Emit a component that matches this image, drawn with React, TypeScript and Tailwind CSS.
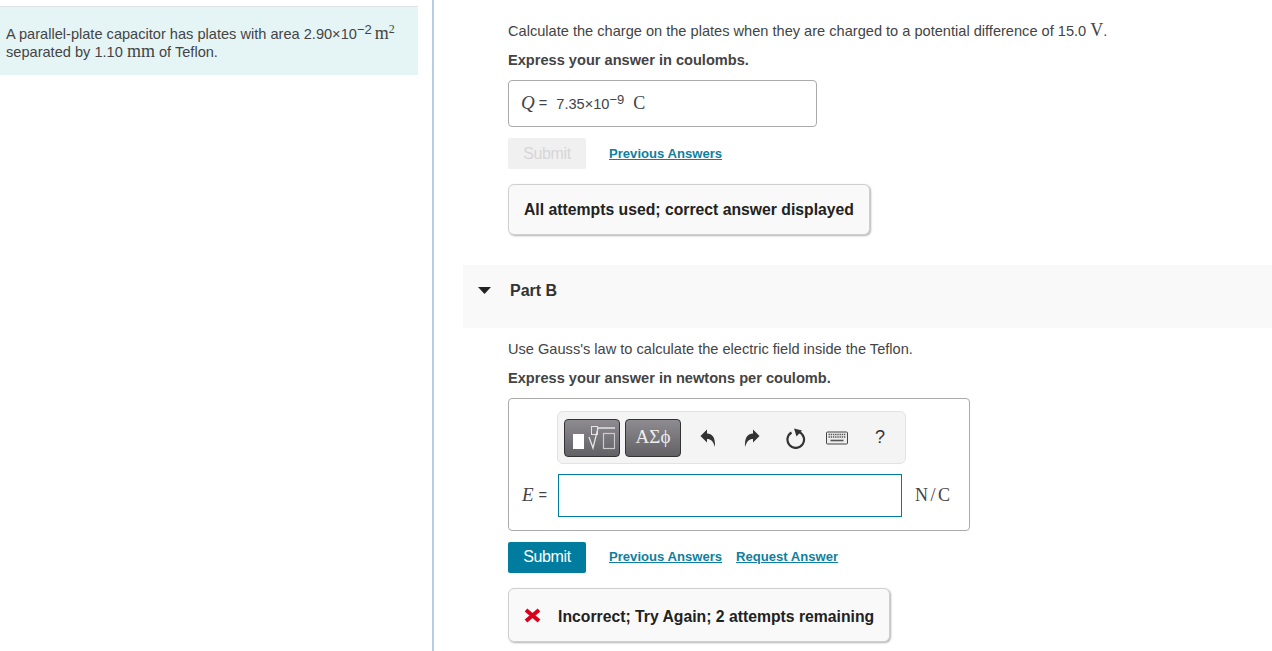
import React from "react";

const serif = "font-['Liberation_Serif',serif]";

function Actions({ disabled, request }: { disabled?: boolean; request?: boolean }) {
  return (
    <div className="flex items-center h-[31px]">
      <div
        className={`w-[78px] h-[31px] rounded-[2px] flex items-center justify-center text-[16px] tracking-[-0.35px] ${
          disabled ? "bg-[#f0f0f0] text-[#d6d6d6]" : "bg-[#007c9e] text-white pb-[2px]"
        }`}
      >
        Submit
      </div>
      <a className={`ml-[23px] text-[13.1px] font-bold text-[#0f7f9f] underline ${request ? "mb-[2px]" : ""}`}>
        Previous Answers
      </a>
      {request && (
        <a className="ml-[14px] mb-[2px] text-[13.1px] font-bold text-[#0f7f9f] underline">Request Answer</a>
      )}
    </div>
  );
}

function Feedback({ tall, children }: { tall?: boolean; children: React.ReactNode }) {
  return (
    <div
      className={`inline-flex items-center px-[15px] bg-[#f9f9f9] border border-[#cfcfcf] rounded-[6px] shadow-[1px_1px_2px_rgba(0,0,0,0.3)] text-[15.75px] font-bold text-[#222] ${
        tall ? "h-[54px] pt-[3px]" : "h-[51px]"
      }`}
    >
      {children}
    </div>
  );
}

function Toolbar() {
  return (
    <div className="w-[349px] h-[53px] ml-[48px] bg-[#f4f4f4] border border-[#e2e2e2] rounded-[6px] flex items-center pl-[6px]">
      <div className="w-[56px] h-[38px] rounded-[4px] border border-[#333] bg-gradient-to-b from-[#8e8c90] to-[#626165] flex items-center justify-center">
        <svg width="46" height="32" viewBox="0 0 46 32">
          <rect x="4" y="12" width="11" height="15" fill="#fff" />
          <rect x="22.5" y="4.5" width="6" height="8" fill="none" stroke="#e4e4e4" strokeWidth="1" />
          <path d="M20 15l4 11 5-20h17" fill="none" stroke="#e4e4e4" strokeWidth="1.3" />
          <rect x="34.5" y="11.5" width="11" height="15" fill="none" stroke="#ccc" strokeWidth="1.2" />
        </svg>
      </div>
      <div className={`ml-[5px] w-[56px] h-[38px] rounded-[4px] border border-[#333] bg-gradient-to-b from-[#8e8c90] to-[#626165] flex items-center justify-center text-[#eee] text-[19px] ${serif}`}>
        ΑΣϕ
      </div>
      <svg className="ml-[17px]" width="20" height="20" viewBox="0 0 20 20">
        <path d="M2.5 8L9 1.5V5.5C14 5.5 17.5 9 17 19C15 13 13 11 9 11V14.5Z" fill="#333" />
      </svg>
      <svg className="ml-[24px]" width="20" height="20" viewBox="0 0 20 20">
        <path d="M17.5 8L11 1.5V5.5C6 5.5 2.5 9 3 19C5 13 7 11 11 11V14.5Z" fill="#333" />
      </svg>
      <svg className="ml-[22px]" width="22" height="22" viewBox="0 0 22 22">
        <path d="M7.5 5.5A8.3 8.3 0 1 0 15 5" fill="none" stroke="#333" strokeWidth="2.2" />
        <path d="M10 1.5L18 3.5L12.5 9.5Z" fill="#333" />
      </svg>
      <svg className="ml-[20px]" width="24" height="14" viewBox="0 0 24 14">
        <rect x="0.5" y="1" width="21" height="12" rx="1" fill="#eee" stroke="#444" />
        <path d="M2.5 3.5h17M2.5 6h17" stroke="#555" strokeWidth="1.4" strokeDasharray="1.4 0.8" />
        <path d="M4.5 9.5h13" stroke="#555" strokeWidth="1.6" />
      </svg>
      <span className="ml-[25px] text-[18px] text-[#333]">?</span>
    </div>
  );
}

export default function App() {
  return (
    <div className="w-[1272px] h-[651px] overflow-hidden bg-white flex font-['Liberation_Sans',sans-serif] text-[#444]">
      <div className="w-[418px] shrink-0 pt-[6px]">
        <div className="h-[69px] bg-[#e5f5f6] border-t border-[#dfe3e6] pt-[17px] pl-[6px] text-[14.6px] leading-[18px]">
          <div className="h-[18px] whitespace-nowrap">
            A parallel-plate capacitor has plates with area 2.90×10
            <sup className="text-[13px] align-baseline relative top-[-5px]">−2</sup>
            <span className={`${serif} text-[18px] ml-[3px]`}>m</span>
            <sup className={`${serif} text-[12px] align-baseline relative top-[-6px]`}>2</sup>
          </div>
          <div className="whitespace-nowrap">
            separated by 1.10 <span className={`${serif} text-[18px]`}>mm</span> of Teflon.
          </div>
        </div>
      </div>

      <div className="ml-[14px] w-[2px] h-full shrink-0 bg-[#b9cde1]" />

      <div className="flex-1 min-w-0 pl-[29px]">
        <div className="pl-[45px] pt-[20px]">
          <p className="text-[14.6px] leading-[20px] whitespace-nowrap">
            Calculate the charge on the plates when they are charged to a potential difference of 15.0{" "}
            <span className={`${serif} text-[18px]`}>V</span>.
          </p>
          <p className="mt-[9px] text-[14.6px] leading-[20px] font-bold">Express your answer in coulombs.</p>
          <div className="mt-[10px] w-[309px] h-[47px] border border-[#aaa] rounded-[4px] flex items-center pl-[12px]">
            <span className={`${serif} italic text-[19px]`}>Q</span>
            <span className="ml-[4px] text-[14.6px]">=</span>
            <span className="ml-[9px] text-[14.6px] relative top-[1px]">
              7.35×10
              <sup className="text-[13px] align-baseline relative top-[-5px]">−9</sup>
            </span>
            <span className={`${serif} text-[18px] ml-[9px]`}>C</span>
          </div>
          <div className="mt-[11px]">
            <Actions disabled />
          </div>
          <div className="mt-[15px]">
            <Feedback>All attempts used; correct answer displayed</Feedback>
          </div>
        </div>

        <div className="mt-[30px] h-[63px] bg-[#f9f9f9] flex items-start pt-[17px]">
          <svg className="ml-[15px] mt-[5px]" width="13" height="7" viewBox="0 0 13 7">
            <path d="M0 0h13L6.5 7z" fill="#222" />
          </svg>
          <span className="ml-[19px] text-[16px] leading-[18px] font-bold text-[#333]">Part B</span>
        </div>

        <div className="pl-[45px] pt-[11px]">
          <p className="text-[14.6px] leading-[20px]">
            Use Gauss's law to calculate the electric field inside the Teflon.
          </p>
          <p className="mt-[9px] text-[14.6px] leading-[20px] font-bold">Express your answer in newtons per coulomb.</p>
          <div className="mt-[10px] w-[462px] h-[133px] border border-[#aaa] rounded-[4px] pt-[12px]">
            <Toolbar />
            <div className="mt-[10px] flex items-center pl-[13px]">
              <div className="w-[36px] shrink-0 flex items-center">
                <span className={`${serif} italic text-[19px]`}>E</span>
                <span className="ml-[5px] text-[14.6px]">=</span>
              </div>
              <div className="w-[344px] h-[43px] border border-[#007c9e]" />
              <span className={`${serif} ml-[13px] text-[18px] tracking-[2.5px]`}>N/C</span>
            </div>
          </div>
          <div className="mt-[11px]">
            <Actions request />
          </div>
          <div className="mt-[15px]">
            <Feedback tall>
              <svg className="mr-[17px] mb-[3px]" width="17" height="15" viewBox="0 0 17 15">
                <path d="M2 2l13 11M15 2L2 13" stroke="#d9001b" strokeWidth="4" />
              </svg>
              Incorrect; Try Again; 2 attempts remaining
            </Feedback>
          </div>
        </div>
      </div>
    </div>
  );
}
